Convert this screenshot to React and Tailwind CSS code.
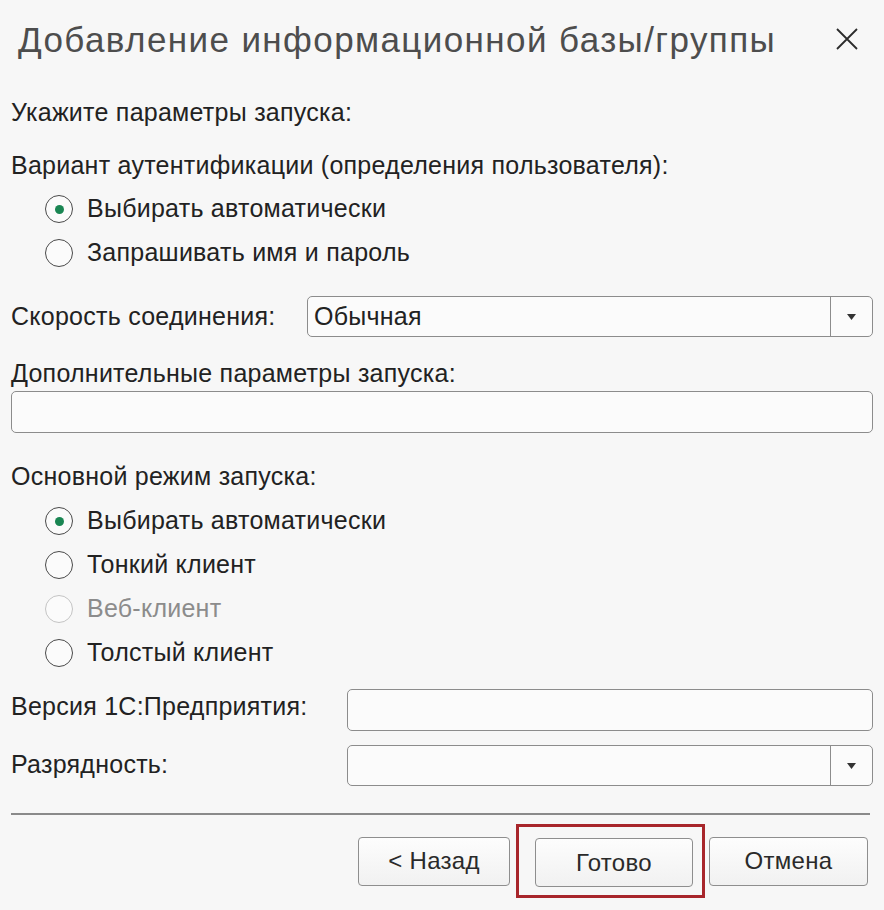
// App.jsx
// Диалог 1С: параметры запуска информационной базы.

import React, { useState } from 'react';

const Radio = ({ checked, disabled, label, onClick }) => (
  <div
    className="flex items-center h-[44px] pl-[34px] cursor-default"
    onClick={disabled ? undefined : onClick}
  >
    <div
      className={`w-[28px] h-[28px] rounded-full border-[1.5px] flex items-center justify-center bg-[#fbfbfb] ${
        disabled ? 'border-[#c4c4c4]' : 'border-[#4a4a4a]'
      }`}
    >
      {checked && <div className="w-[9px] h-[9px] rounded-full bg-[#1a8653]" />}
    </div>
    <span className={`ml-[14px] ${disabled ? 'text-[#8c8c8c]' : 'text-[#222]'}`}>
      {label}
    </span>
  </div>
);

const Select = ({ value, className }) => (
  <div
    className={`flex items-stretch border border-[#8c8c8c] rounded-[5px] bg-[#fbfbfb] ${className}`}
  >
    <div className="flex-1 flex items-center pl-[6px] text-[#222]">{value}</div>
    <div className="w-[42px] border-l border-[#8c8c8c] flex items-center justify-center">
      <svg width="9" height="6" viewBox="0 0 9 6">
        <path d="M0 0 L9 0 L4.5 6 Z" fill="#333" />
      </svg>
    </div>
  </div>
);

const Button = ({ children, className = 'w-[158px]' }) => (
  <button
    className={`h-[49px] rounded-[4px] border border-[#8e8e8e] bg-gradient-to-b from-[#fdfdfd] to-[#f1f1f1] text-[24px] tracking-[0.3px] text-[#2a2a2a] ${className}`}
  >
    {children}
  </button>
);

export default function App() {
  const [auth, setAuth] = useState(0);
  const [mode, setMode] = useState(0);

  return (
    <div
      className="w-[884px] h-[910px] bg-[#f7f7f7] overflow-hidden"
      style={{ fontFamily: '"Liberation Sans", Arial, sans-serif' }}
    >
      {/* Заголовок */}
      <div className="h-[80px] flex items-center pl-[18px] pr-[26px]">
        <h1 className="flex-1 text-[35px] tracking-[1.4px] text-[#4d4d4d] font-normal">
          Добавление информационной базы/группы
        </h1>
        <svg width="22" height="22" viewBox="0 0 22 22" className="mt-[-2px]">
          <path d="M1 1 L21 21 M21 1 L1 21" stroke="#2b2b2b" strokeWidth="1.8" />
        </svg>
      </div>

      <div className="px-[11px] text-[#222] text-[25px] tracking-[0.25px]">
        <div className="mt-[14px] h-[38px] flex items-center">Укажите параметры запуска:</div>
        <div className="mt-[15px] h-[38px] flex items-center">
          Вариант аутентификации (определения пользователя):
        </div>

        <div className="mt-[2px]">
          <Radio checked={auth === 0} label="Выбирать автоматически" onClick={() => setAuth(0)} />
          <Radio checked={auth === 1} label="Запрашивать имя и пароль" onClick={() => setAuth(1)} />
        </div>

        {/* Скорость соединения */}
        <div className="mt-[21px] h-[41px] flex items-center">
          <div className="w-[295px]">Скорость соединения:</div>
          <Select value="Обычная" className="flex-1 h-[41px] ml-[1px]" />
        </div>

        <div className="mt-[22px] h-[30px] flex items-center">Дополнительные параметры запуска:</div>
        <div className="mt-[2px] h-[42px] border border-[#8c8c8c] rounded-[5px] bg-[#fbfbfb]" />

        <div className="mt-[25px] h-[38px] flex items-center">Основной режим запуска:</div>
        <div className="mt-[3px]">
          <Radio checked={mode === 0} label="Выбирать автоматически" onClick={() => setMode(0)} />
          <Radio checked={mode === 1} label="Тонкий клиент" onClick={() => setMode(1)} />
          <Radio disabled label="Веб-клиент" />
          <Radio checked={mode === 3} label="Толстый клиент" onClick={() => setMode(3)} />
        </div>

        {/* Версия и разрядность */}
        <div className="mt-[14px] h-[42px] flex items-center">
          <div className="w-[336px] pb-[6px]">Версия 1С:Предприятия:</div>
          <div className="flex-1 h-[42px] border border-[#8c8c8c] rounded-[5px] bg-[#fbfbfb]" />
        </div>
        <div className="mt-[14px] h-[41px] flex items-center">
          <div className="w-[336px] pb-[2px]">Разрядность:</div>
          <Select value="" className="flex-1 h-[41px]" />
        </div>

        <div className="mt-[27px] h-[2px] bg-[#8a8a8a] mr-[3px]" />
      </div>

      {/* Кнопки */}
      <div className="mt-[9px] flex items-center justify-end pr-[16px]">
        <Button className="w-[152px]">&lt; Назад</Button>
        <div className="ml-[6px] border-[3px] border-[#a8262b] pl-[16px] pr-[9px] pt-[11px] pb-[8px]">
          <Button>Готово</Button>
        </div>
        <div className="ml-[4px]">
          <Button className="w-[159px]">Отмена</Button>
        </div>
      </div>
    </div>
  );
}
